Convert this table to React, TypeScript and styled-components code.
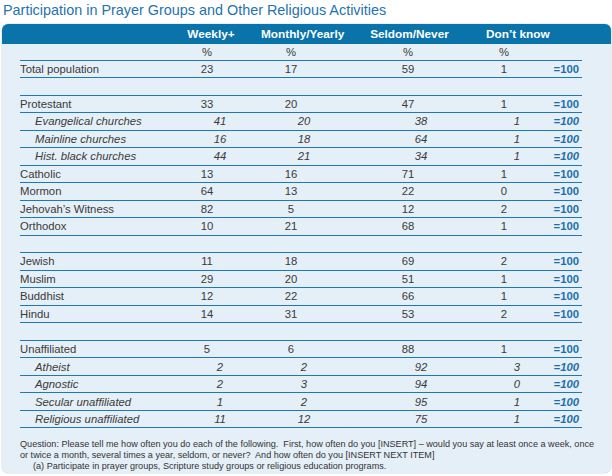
import React from "react";
import styled, { createGlobalStyle } from "styled-components";

const Global = createGlobalStyle`
  html, body { margin: 0; padding: 0; background: #ffffff; }
  body { font-family: "Liberation Sans", Arial, sans-serif; color: #333; }
`;

const Page = styled.div`
  width: 612px;
  height: 476px;
  box-sizing: border-box;
  padding: 0 1px 0 2px;
`;

const Title = styled.h1`
  margin: 0;
  height: 24px;
  padding-left: 1px;
  font-size: 14.4px;
  font-weight: normal;
  line-height: 20px;
  color: #1f72b0;
  white-space: nowrap;
`;

const Panel = styled.div`
  width: 609px;
  height: 449px;
  background: #e5eff7;
  border-radius: 6px;
  overflow: hidden;
  box-shadow: 0 0 0 0.5px #d4dde4;
`;

const COLS = "150px 74px 94px 140px 52px 52px";

const HeaderBar = styled.div`
  height: 19.5px;
  background: #0a74aa;
  display: grid;
  grid-template-columns: ${COLS};
  align-items: center;
  padding: 0 29px 0 18px;
`;

const HeadCell = styled.div<{ $shift: number }>`
  color: #ffffff;
  font-weight: bold;
  font-size: 11.8px;
  text-align: center;
  white-space: nowrap;
  padding-left: ${(p) => p.$shift * 2}px;
`;

const Body = styled.div`
  padding: 0 29px 0 18px;
`;

const Row = styled.div<{ $h: number }>`
  display: grid;
  grid-template-columns: ${COLS};
  align-items: center;
  height: ${(p) => p.$h}px;
  box-sizing: border-box;
  border-bottom: 1px solid #1f78b6;
  font-size: 11.3px;
  color: #3a3a3a;
`;

const Label = styled.div<{ $sub?: boolean }>`
  white-space: nowrap;
  font-style: ${(p) => (p.$sub ? "italic" : "normal")};
  padding-left: ${(p) => (p.$sub ? 15 : 0)}px;
`;

const Num = styled.div<{ $sub?: boolean }>`
  text-align: center;
  font-style: ${(p) => (p.$sub ? "italic" : "normal")};
  padding-left: ${(p) => (p.$sub ? 26 : 0)}px;
`;

const Total = styled.div<{ $sub?: boolean }>`
  text-align: right;
  padding-right: 3px;
  font-weight: bold;
  color: #1d6fa9;
  font-style: ${(p) => (p.$sub ? "italic" : "normal")};
`;

const Notes = styled.div`
  margin-top: 11px;
  padding-left: 18px;
  font-size: 9.1px;
  line-height: 10.8px;
  color: #333;
`;

const NoteLine = styled.div<{ $indent?: boolean }>`
  white-space: pre;
  padding-left: ${(p) => (p.$indent ? 13 : 0)}px;
`;

type R = { label?: string; v?: number[]; sub?: boolean };

const rows: R[] = [
  { label: "Total population", v: [23, 17, 59, 1] },
  {},
  { label: "Protestant", v: [33, 20, 47, 1] },
  { label: "Evangelical churches", v: [41, 20, 38, 1], sub: true },
  { label: "Mainline churches", v: [16, 18, 64, 1], sub: true },
  { label: "Hist. black churches", v: [44, 21, 34, 1], sub: true },
  { label: "Catholic", v: [13, 16, 71, 1] },
  { label: "Mormon", v: [64, 13, 22, 0] },
  { label: "Jehovah\u2019s Witness", v: [82, 5, 12, 2] },
  { label: "Orthodox", v: [10, 21, 68, 1] },
  {},
  { label: "Jewish", v: [11, 18, 69, 2] },
  { label: "Muslim", v: [29, 20, 51, 1] },
  { label: "Buddhist", v: [12, 22, 66, 1] },
  { label: "Hindu", v: [14, 31, 53, 2] },
  {},
  { label: "Unaffiliated", v: [5, 6, 88, 1] },
  { label: "Atheist", v: [2, 2, 92, 3], sub: true },
  { label: "Agnostic", v: [2, 3, 94, 0], sub: true },
  { label: "Secular unaffiliated", v: [1, 2, 95, 1], sub: true },
  { label: "Religious unaffiliated", v: [11, 12, 75, 1], sub: true },
];

const heads: [string, number][] = [
  ["Weekly+", 4],
  ["Monthly/Yearly", 8.5],
  ["Seldom/Never", 1.5],
  ["Don\u2019t know", 4],
];

export default function App() {
  return (
    <Page>
      <Global />
      <Title>Participation in Prayer Groups and Other Religious Activities</Title>
      <Panel>
        <HeaderBar>
          <div />
          {heads.map(([h, s]) => (
            <HeadCell key={h} $shift={s}>
              {h}
            </HeadCell>
          ))}
          <div />
        </HeaderBar>
        <Body>
          <Row $h={17}>
            <div />
            <Num>%</Num>
            <Num>%</Num>
            <Num>%</Num>
            <Num>%</Num>
            <div />
          </Row>
          {rows.map((r, i) =>
            r.label ? (
              <Row key={i} $h={17.52}>
                <Label $sub={r.sub}>{r.label}</Label>
                {r.v!.map((n, j) => (
                  <Num key={j} $sub={r.sub}>
                    {n}
                  </Num>
                ))}
                <Total $sub={r.sub}>=100</Total>
              </Row>
            ) : (
              <Row key={i} $h={17.52} />
            )
          )}
        </Body>
        <Notes>
          <NoteLine>
            {"Question: Please tell me how often you do each of the following.  First, how often do you [INSERT] \u2013 would you say at least once a week, once"}
          </NoteLine>
          <NoteLine>
            {"or twice a month, several times a year, seldom, or never?  And how often do you [INSERT NEXT ITEM]"}
          </NoteLine>
          <NoteLine $indent>
            {"(a) Participate in prayer groups, Scripture study groups or religious education programs."}
          </NoteLine>
        </Notes>
      </Panel>
    </Page>
  );
}
